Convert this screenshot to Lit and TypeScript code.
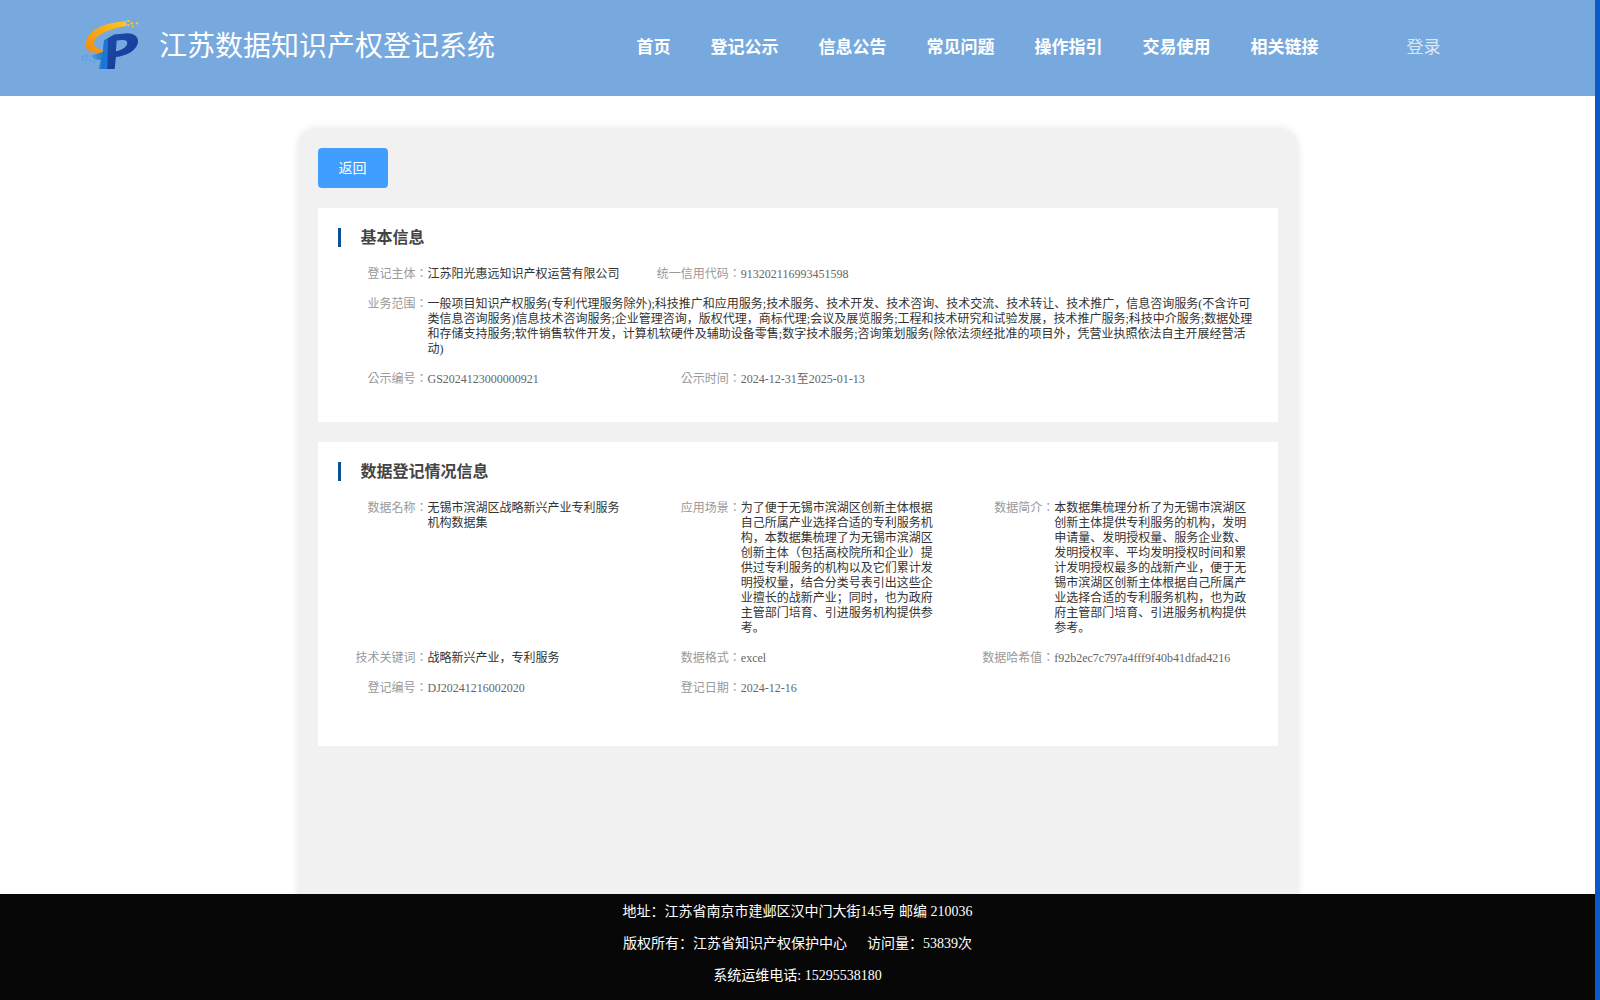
import { LitElement, html, css } from "lit";
import { customElement } from "lit/decorators.js";

const navItems = ["首页", "登记公示", "信息公告", "常见问题", "操作指引", "交易使用", "相关链接"];

const basicInfo = [
  { label: "登记主体：", value: "江苏阳光惠远知识产权运营有限公司" },
  { label: "统一信用代码：", value: "913202116993451598", muted: true, span: 2 },
  {
    label: "业务范围：",
    value:
      "一般项目知识产权服务(专利代理服务除外);科技推广和应用服务;技术服务、技术开发、技术咨询、技术交流、技术转让、技术推广，信息咨询服务(不含许可类信息咨询服务)信息技术咨询服务;企业管理咨询，版权代理，商标代理;会议及展览服务;工程和技术研究和试验发展，技术推广服务;科技中介服务;数据处理和存储支持服务;软件销售软件开发，计算机软硬件及辅助设备零售;数字技术服务;咨询策划服务(除依法须经批准的项目外，凭营业执照依法自主开展经营活动)",
    wide: true,
  },
  { label: "公示编号：", value: "GS2024123000000921", muted: true },
  { label: "公示时间：", value: "2024-12-31至2025-01-13", muted: true, span: 2 },
];

const dataInfo = [
  { label: "数据名称：", value: "无锡市滨湖区战略新兴产业专利服务机构数据集" },
  {
    label: "应用场景：",
    value:
      "为了便于无锡市滨湖区创新主体根据自己所属产业选择合适的专利服务机构，本数据集梳理了为无锡市滨湖区创新主体（包括高校院所和企业）提供过专利服务的机构以及它们累计发明授权量，结合分类号表引出这些企业擅长的战新产业；同时，也为政府主管部门培育、引进服务机构提供参考。",
  },
  {
    label: "数据简介：",
    value:
      "本数据集梳理分析了为无锡市滨湖区创新主体提供专利服务的机构，发明申请量、发明授权量、服务企业数、发明授权率、平均发明授权时间和累计发明授权最多的战新产业，便于无锡市滨湖区创新主体根据自己所属产业选择合适的专利服务机构，也为政府主管部门培育、引进服务机构提供参考。",
  },
  { label: "技术关键词：", value: "战略新兴产业，专利服务" },
  { label: "数据格式：", value: "excel", muted: true },
  { label: "数据哈希值：", value: "f92b2ec7c797a4fff9f40b41dfad4216", muted: true },
  { label: "登记编号：", value: "DJ20241216002020", muted: true },
  { label: "登记日期：", value: "2024-12-16", muted: true },
];

type Field = { label: string; value: string; muted?: boolean; wide?: boolean; span?: number };

@customElement("app-root")
export class AppRoot extends LitElement {
  static styles = css`
    :host {
      display: flex;
      width: 1600px;
      height: 1000px;
      overflow: hidden;
      background: #fff;
      font-family: "Liberation Serif", "Noto Sans CJK SC", serif;
    }
    .page {
      flex: 1;
      min-width: 0;
      display: flex;
      flex-direction: column;
    }
    .scrollbar {
      width: 5px;
      background: #0a5ac8;
    }
    .header {
      box-sizing: border-box;
      height: 96px;
      flex: none;
      display: flex;
      align-items: center;
      padding: 0 0 6px 80px;
      background: #78a9de;
      color: #fff;
    }
    .brand {
      display: flex;
      align-items: center;
      gap: 19px;
      margin-top: 4px;
    }
    .brand svg {
      display: block;
      width: 60px;
      height: 53px;
      margin-top: -2px;
    }
    .brand h1 {
      margin: 0;
      font-size: 28px;
      font-weight: 400;
      line-height: 40px;
      white-space: nowrap;
    }
    .nav {
      display: flex;
      gap: 40px;
      margin-left: 141.5px;
      font-size: 17px;
      font-weight: 700;
    }
    .login {
      margin-left: 88px;
      font-size: 17px;
      color: #dbe7f5;
    }
    .main {
      flex: 1;
      min-height: 0;
      overflow: hidden;
      padding-top: 32px;
    }
    .card {
      box-sizing: border-box;
      width: 1000px;
      height: 800px;
      margin: 0 auto;
      padding: 20px;
      border-radius: 20px;
      background: #f1f1f1;
      box-shadow: 0 0 8px rgba(0, 0, 0, 0.1);
    }
    .back {
      display: block;
      width: 70px;
      height: 40px;
      margin-bottom: 20px;
      padding: 0 0 2px;
      border: 0;
      border-radius: 4px;
      background: #409eff;
      color: #fff;
      font: inherit;
      font-size: 14px;
    }
    .panel {
      padding: 20px 0 35px 20px;
      margin-bottom: 20px;
      background: #fff;
    }
    .panel.tall {
      padding-bottom: 50px;
    }
    .panel h2 {
      margin: 0 0 20px;
      padding-left: 20px;
      border-left: 3px solid #0a5196;
      font-size: 16px;
      font-weight: 700;
      line-height: 19px;
      color: #444;
    }
    .fields {
      display: grid;
      grid-template-columns: repeat(3, 1fr);
      row-gap: 15px;
    }
    .field {
      display: flex;
      font-size: 12px;
      line-height: 15px;
    }
    .field.wide {
      grid-column: 1 / -1;
    }
    .span2 {
      grid-column: span 2;
    }
    .label {
      flex: none;
      width: 90px;
      text-align: right;
      color: #999;
      font-family: "Liberation Serif", "Noto Sans CJK TC", serif;
    }
    .value {
      width: 200px;
      color: #333;
    }
    .field.wide .value {
      width: 826px;
    }
    .value.muted {
      color: #666;
    }
    .footer {
      flex: none;
      height: 106px;
      box-sizing: border-box;
      padding-top: 2px;
      background: #070707;
      color: #fff;
      font-size: 14px;
      line-height: 32px;
      text-align: center;
    }
    .visits {
      margin-left: 20px;
    }
  `;

  private renderField(f: Field) {
    const cls = `field ${f.wide ? "wide" : ""} ${f.span ? "span2" : ""}`;
    return html`<div class=${cls}>
      <span class="label">${f.label}</span>
      <span class="value ${f.muted ? "muted" : ""}">${f.value}</span>
    </div>`;
  }

  private renderLogo() {
    return html`<svg viewBox="30 30 180 160" aria-hidden="true">
      <defs>
        <linearGradient id="swoosh" x1="0" y1="1" x2="1" y2="0">
          <stop offset="0" stop-color="#f08a12" />
          <stop offset="1" stop-color="#fdc71f" />
        </linearGradient>
        <linearGradient id="letter" x1="0" y1="0" x2="1" y2="1">
          <stop offset="0" stop-color="#1d4fb0" />
          <stop offset="1" stop-color="#12378f" />
        </linearGradient>
        <linearGradient id="wing" x1="0" y1="0" x2="1" y2="0">
          <stop offset="0" stop-color="#5aa0e0" />
          <stop offset="1" stop-color="#0f6fd0" />
        </linearGradient>
      </defs>
      <path
        d="M168 34 C118 38 62 50 47 96 C40 122 62 132 104 130 L108 120 C86 120 68 112 72 98 C78 72 122 56 170 48 Z"
        fill="url(#swoosh)"
      />
      <g fill="#fdc71f">
        <rect x="172" y="30" width="7" height="6" />
        <rect x="182" y="37" width="7" height="6" />
        <rect x="172" y="42" width="7" height="6" />
        <rect x="198" y="37" width="7" height="6" />
        <rect x="186" y="47" width="6" height="5" />
      </g>
      <path d="M106 124 L60 138 L78 150 L92 150 L86 178 L110 178 Z" fill="url(#wing)" />
      <g fill="#5aa0e0">
        <rect x="34" y="138" width="7" height="6" />
        <rect x="46" y="136" width="7" height="6" />
        <rect x="44" y="146" width="7" height="6" />
        <rect x="34" y="148" width="6" height="5" />
        <rect x="56" y="150" width="7" height="5" />
        <rect x="68" y="154" width="7" height="5" />
      </g>
      <path
        fill-rule="evenodd"
        d="M102 92 L132 74 L172 70 C196 70 208 84 204 100 C198 124 168 138 138 142 L134 178 L96 178 Z M140 92 L138 124 C156 120 170 112 172 100 C173 92 164 88 140 92 Z"
        fill="url(#letter)"
      />
      <path d="M102 92 L114 86 L112 178 L96 178 Z" fill="#1a78d8" />
    </svg>`;
  }

  render() {
    return html`
      <div class="page">
        <header class="header">
          <div class="brand">
            ${this.renderLogo()}
            <h1>江苏数据知识产权登记系统</h1>
          </div>
          <nav class="nav">${navItems.map((n) => html`<span>${n}</span>`)}</nav>
          <span class="login">登录</span>
        </header>
        <main class="main">
          <div class="card">
            <button class="back">返回</button>
            <section class="panel">
              <h2>基本信息</h2>
              <div class="fields">${basicInfo.map((f) => this.renderField(f))}</div>
            </section>
            <section class="panel tall">
              <h2>数据登记情况信息</h2>
              <div class="fields">${dataInfo.map((f) => this.renderField(f))}</div>
            </section>
          </div>
        </main>
        <footer class="footer">
          <div>地址：江苏省南京市建邺区汉中门大街145号 邮编 210036</div>
          <div>版权所有：江苏省知识产权保护中心<span class="visits">访问量：53839次</span></div>
          <div>系统运维电话: 15295538180</div>
        </footer>
      </div>
      <div class="scrollbar"></div>
    `;
  }
}
